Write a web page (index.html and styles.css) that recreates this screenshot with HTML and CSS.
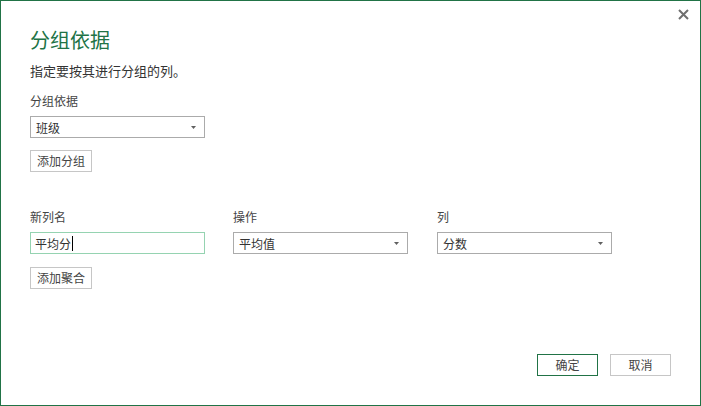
FILE: index.html
```html
<!DOCTYPE html>
<html lang="zh-CN">
<head>
<meta charset="utf-8">
<title>分组依据</title>
<link rel="stylesheet" href="styles.css">
</head>
<body>
<div class="dialog">
  <button class="close" aria-label="关闭">
    <svg width="11" height="11" viewBox="0 0 11 11"><path d="M1 1L10 10M10 1L1 10" stroke="#6f6f6f" stroke-width="2" fill="none"/></svg>
  </button>
  <h1 class="title">分组依据</h1>
  <p class="subtitle">指定要按其进行分组的列。</p>
  <div class="label first-label">分组依据</div>
  <div class="select">
    <span>班级</span>
    <svg class="arrow" width="5" height="3" viewBox="0 0 5 3"><path d="M0 0H5L2.5 3Z" fill="#606060"/></svg>
  </div>
  <button class="btn add-group">添加分组</button>

  <div class="agg-grid">
    <div class="label">新列名</div>
    <div class="label">操作</div>
    <div class="label">列</div>
    <div class="input"><span>平均分</span><span class="caret"></span></div>
    <div class="select">
      <span>平均值</span>
      <svg class="arrow" width="5" height="3" viewBox="0 0 5 3"><path d="M0 0H5L2.5 3Z" fill="#606060"/></svg>
    </div>
    <div class="select">
      <span>分数</span>
      <svg class="arrow" width="5" height="3" viewBox="0 0 5 3"><path d="M0 0H5L2.5 3Z" fill="#606060"/></svg>
    </div>
  </div>
  <button class="btn add-agg">添加聚合</button>

  <div class="footer">
    <button class="btn ok">确定</button>
    <button class="btn">取消</button>
  </div>
</div>
</body>
</html>
```

FILE: styles.css
```css
html, body {
  margin: 0;
  padding: 0;
  background: #ffffff;
}

body {
  font-family: "Noto Sans CJK SC", "Noto Sans", sans-serif;
  color: #444444;
}

.dialog {
  position: relative;
  box-sizing: border-box;
  width: 701px;
  height: 406px;
  border: 1px solid #217346;
  padding: 29px 29px 29px 29px;
  display: flex;
  flex-direction: column;
  align-items: flex-start;
}

.close {
  position: absolute;
  top: 8px;
  right: 11px;
  width: 11px;
  height: 11px;
  padding: 0;
  border: 0;
  background: transparent;
  display: flex;
}

.title {
  margin: 0;
  font-size: 20px;
  line-height: 20px;
  font-weight: normal;
  color: #217346;
}

.subtitle {
  margin: 14px 0 0 0;
  font-size: 13px;
  line-height: 14px;
  color: #333333;
}

.label {
  font-size: 12px;
  line-height: 12px;
  color: #444444;
}

.first-label {
  margin-top: 17px;
}

.select,
.input {
  box-sizing: border-box;
  width: 175px;
  height: 22px;
  border: 1px solid #ababab;
  display: flex;
  align-items: center;
  font-size: 12px;
  color: #333333;
  background: #ffffff;
}

.select {
  padding: 0 8px 0 5px;
  justify-content: space-between;
}

.first-label + .select {
  margin-top: 9px;
}

.input {
  border-color: #95d3b1;
  padding: 0 4px;
}

.caret {
  width: 1px;
  height: 15px;
  background: #000000;
  margin-left: 1px;
}

.arrow {
  display: block;
}

.btn {
  box-sizing: border-box;
  width: 62px;
  height: 22px;
  padding: 0;
  border: 1px solid #c6c6c6;
  background: #ffffff;
  font-family: "Noto Sans CJK SC", "Noto Sans", sans-serif;
  font-size: 12px;
  line-height: 20px;
  color: #444444;
}

.add-group {
  margin-top: 12px;
}

.agg-grid {
  margin-top: 39px;
  display: grid;
  grid-template-columns: 203px 204px 175px;
  row-gap: 9px;
}

.add-agg {
  margin-top: 13px;
}

.footer {
  margin-top: auto;
  align-self: flex-end;
  display: flex;
  gap: 12px;
}

.footer .btn {
  width: 61px;
}

.footer .ok {
  border-color: #217346;
}
```
